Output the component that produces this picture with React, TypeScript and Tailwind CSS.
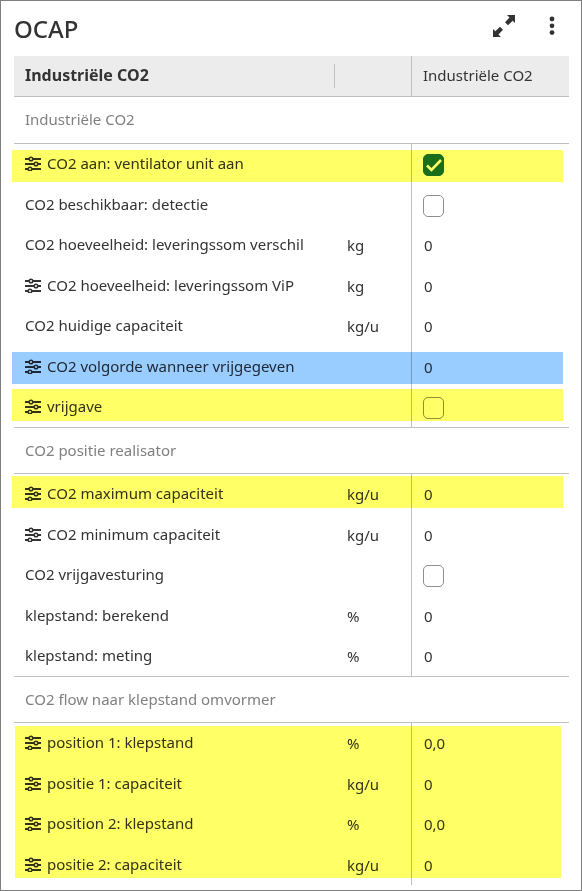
import { useState } from "react";
import clsx from "clsx";

type Mark = "yellow-high" | "yellow-low" | "blue";

type Row = {
  name: string;
  unit?: string;
  value: string | boolean;
  adjustable?: boolean;
  mark?: Mark;
};

type Group = {
  title: string;
  rows: Row[];
  marked?: boolean;
};

const groups: Group[] = [
  {
    title: "Industriële CO2",
    rows: [
      {
        name: "CO2 aan: ventilator unit aan",
        value: true,
        adjustable: true,
        mark: "yellow-low",
      },
      { name: "CO2 beschikbaar: detectie", value: false },
      {
        name: "CO2 hoeveelheid: leveringssom verschil",
        unit: "kg",
        value: "0",
      },
      {
        name: "CO2 hoeveelheid: leveringssom ViP",
        unit: "kg",
        value: "0",
        adjustable: true,
      },
      { name: "CO2 huidige capaciteit", unit: "kg/u", value: "0" },
      {
        name: "CO2 volgorde wanneer vrijgegeven",
        value: "0",
        adjustable: true,
        mark: "blue",
      },
      {
        name: "vrijgave",
        value: false,
        adjustable: true,
        mark: "yellow-high",
      },
    ],
  },
  {
    title: "CO2 positie realisator",
    rows: [
      {
        name: "CO2 maximum capaciteit",
        unit: "kg/u",
        value: "0",
        adjustable: true,
        mark: "yellow-high",
      },
      {
        name: "CO2 minimum capaciteit",
        unit: "kg/u",
        value: "0",
        adjustable: true,
      },
      { name: "CO2 vrijgavesturing", value: false },
      { name: "klepstand: berekend", unit: "%", value: "0" },
      { name: "klepstand: meting", unit: "%", value: "0" },
    ],
  },
  {
    title: "CO2 flow naar klepstand omvormer",
    marked: true,
    rows: [
      {
        name: "position 1: klepstand",
        unit: "%",
        value: "0,0",
        adjustable: true,
      },
      {
        name: "positie 1: capaciteit",
        unit: "kg/u",
        value: "0",
        adjustable: true,
      },
      {
        name: "position 2: klepstand",
        unit: "%",
        value: "0,0",
        adjustable: true,
      },
      {
        name: "positie 2: capaciteit",
        unit: "kg/u",
        value: "0",
        adjustable: true,
      },
    ],
  },
];

const markStyles: Record<Mark, string> = {
  "yellow-low": "top-1.5 bg-[#ffff66]",
  "yellow-high": "top-0.5 bg-[#ffff66]",
  blue: "top-1.5 bg-[#99ccff]",
};

function TuneIcon() {
  return (
    <svg
      viewBox="0 0 16 16"
      className="w-4 h-4 shrink-0"
      fill="none"
      stroke="currentColor"
      aria-hidden="true"
    >
      <path
        strokeWidth="2"
        d="M0 4h4M8 4h8M0 9h9M13 9h3M0 14h3M7 14h9"
      />
      <g strokeWidth="1.5">
        <circle cx="6" cy="4" r="1.8" />
        <circle cx="11" cy="9" r="1.8" />
        <circle cx="5" cy="14" r="1.8" />
      </g>
    </svg>
  );
}

function ExpandIcon() {
  return (
    <svg viewBox="0 0 24 24" className="w-6 h-6" aria-hidden="true">
      <path
        fill="currentColor"
        d="M15 1h8v8l-2.300-2.300-4.700 4.500-3-3 4.500-4.700zM1 15l2.300 2.300L8 12.800l3 3-4.500 4.700L9 23H1z"
      />
    </svg>
  );
}

function MenuIcon() {
  return (
    <svg
      viewBox="0 0 24 24"
      className="w-6 h-6"
      fill="currentColor"
      aria-hidden="true"
    >
      <circle cx="12" cy="5" r="2.400" />
      <circle cx="12" cy="11.800" r="2.400" />
      <circle cx="12" cy="18.600" r="2.400" />
    </svg>
  );
}

function Checkbox({
  label,
  initialChecked,
}: {
  label: string;
  initialChecked: boolean;
}) {
  const [checked, setChecked] = useState(initialChecked);

  return (
    <label className="grid w-[21px] h-[22px] cursor-pointer">
      <input
        type="checkbox"
        aria-label={label}
        checked={checked}
        onChange={(event) => setChecked(event.target.checked)}
        className="col-start-1 row-start-1 appearance-none rounded-[5px] border border-[#8f8f8f] bg-white checked:border-[#1a6e41] checked:bg-[#1a6e41] cursor-pointer"
      />
      {checked && (
        <svg
          viewBox="0 0 21 22"
          className="col-start-1 row-start-1 pointer-events-none"
          fill="none"
          stroke="white"
          strokeWidth="2.6"
          aria-hidden="true"
        >
          <path d="M4 11.500l4.500 4.500L18 6" />
        </svg>
      )}
    </label>
  );
}

export default function App() {
  return (
    <main className="min-h-screen border border-[#808080] bg-white pl-[13px] pr-3 pb-[5px] font-['Noto_Sans',sans-serif] text-[15px] leading-5 text-[#333333]">
      <header className="flex items-center justify-between h-[55px]">
        <h1 className="text-2xl font-medium">OCAP</h1>
        <div className="flex items-center gap-6 pr-[5px] pb-1.5">
          <button aria-label="Vergroten">
            <ExpandIcon />
          </button>
          <button aria-label="Menu">
            <MenuIcon />
          </button>
        </div>
      </header>

      <table className="w-full table-fixed border-separate border-spacing-0 text-left">
        <colgroup>
          <col />
          <col className="w-[77px]" />
          <col className="w-[158px]" />
        </colgroup>
        <thead>
          <tr className="h-[41px] bg-[#ececec]">
            <th className="border-b border-[#c0c0c0] px-[11px] pb-0.5 text-base font-bold">
              Industriële CO2
            </th>
            <th className="border-b border-[#c0c0c0]">
              <div className="h-6 border-l border-[#c0c0c0]" />
            </th>
            <th className="border-b border-l border-[#c0c0c0] px-[11px] pb-0.5 font-normal">
              Industriële CO2
            </th>
          </tr>
        </thead>
        {groups.map((group, groupIndex) => (
          <tbody key={group.title}>
            <tr className="h-[47px]">
              <th
                colSpan={3}
                className={clsx(
                  "border-b border-[#c0c0c0] px-[11px] pb-0.5 font-normal text-[#808080]",
                  groupIndex > 0 && "border-t",
                )}
              >
                {group.title}
              </th>
            </tr>
            {group.rows.map((row, index) => (
              <tr
                key={row.name}
                className={clsx(
                  "relative",
                  index % 2 === 0 ? "h-10" : "h-[41px]",
                )}
              >
                <td className="pl-[11px] pb-0.5 whitespace-nowrap">
                  <div className="flex items-center gap-1.5">
                    {row.adjustable && <TuneIcon />}
                    {row.name}
                  </div>
                  {row.mark && (
                    <div
                      className={clsx(
                        "absolute -left-0.5 right-1.5 h-8 mix-blend-multiply pointer-events-none",
                        markStyles[row.mark],
                      )}
                    />
                  )}
                  {group.marked && index === 0 && (
                    <div className="absolute left-px right-2 top-[3px] h-[152px] z-10 bg-[#ffff66] mix-blend-multiply pointer-events-none" />
                  )}
                </td>
                <td className="pl-[13px]">{row.unit}</td>
                {typeof row.value === "boolean" ? (
                  <td className="border-l border-[#c0c0c0] pl-[11px] pt-0.5">
                    <Checkbox label={row.name} initialChecked={row.value} />
                  </td>
                ) : (
                  <td className="border-l border-[#c0c0c0] pl-3">
                    {row.value}
                  </td>
                )}
              </tr>
            ))}
          </tbody>
        ))}
      </table>
    </main>
  );
}
